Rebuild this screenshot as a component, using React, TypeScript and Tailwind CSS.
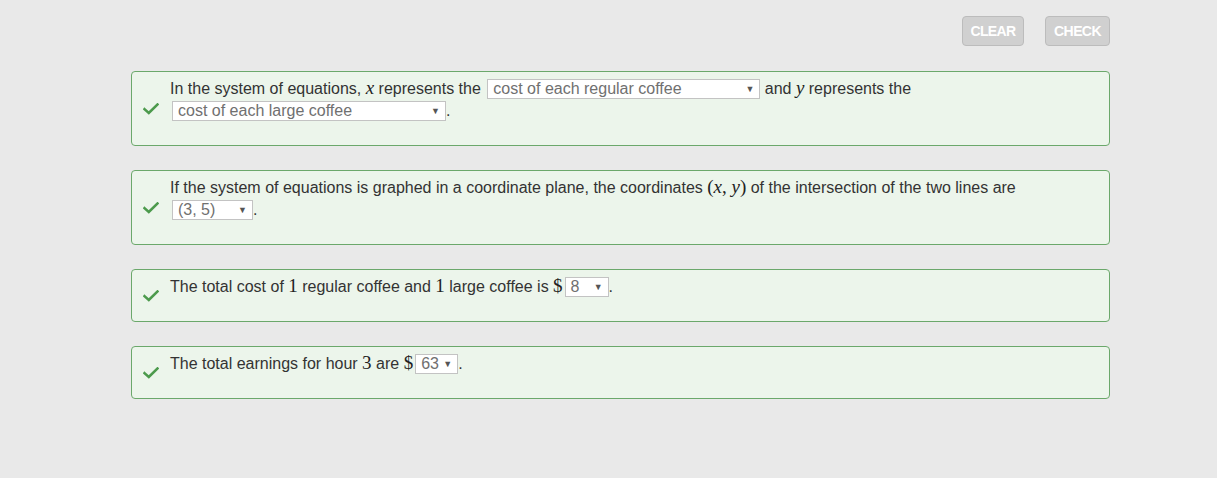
import React from "react";

const Check = () => (
  <svg width="16" height="12" viewBox="0 0 16 12" className="shrink-0">
    <path d="M1.5 6.2 L5.8 10 L14.5 1.5" fill="none" stroke="#4c9a4c" strokeWidth="2.6" strokeLinecap="square" />
  </svg>
);

const Select = ({ value, w, ml = "" }: { value: string; w: string; ml?: string }) => (
  <span
    className={`relative top-[1px] inline-flex items-center justify-between h-[20px] align-top border border-[#c3c3c3] bg-white pl-[5px] pr-[5px] text-[#707070] leading-[18px] ${w} ${ml}`}
  >
    <span>{value}</span>
    <span className="text-[9px] leading-none text-[#555]">▼</span>
  </span>
);

const M = ({ children, italic = true }: { children: React.ReactNode; italic?: boolean }) => (
  <span
    className={`text-[19px] leading-none text-[#222] ${italic ? "italic" : ""}`}
    style={{ fontFamily: '"Liberation Serif", "DejaVu Serif", serif' }}
  >
    {children}
  </span>
);

const Card = ({ children }: { children: React.ReactNode }) => (
  <div className="flex items-center rounded-[4px] border border-[#6ba86b] bg-[#ecf5eb]">
    <div className="w-[38px] flex justify-end pr-[11px]">
      <Check />
    </div>
    <div className="flex-1 pt-[6px] pb-[23px] leading-[22px] text-[16px] text-[#333]">{children}</div>
  </div>
);

export default function App() {
  return (
    <div
      className="w-full h-[478px] bg-[#e9e9e9] pl-[131px] pr-[107px] pt-[16px]"
      style={{ fontFamily: '"Liberation Sans", Arial, sans-serif' }}
    >
      <div className="flex justify-end gap-[21px] mb-[25px]">
        <button className="h-[30px] w-[62px] rounded-[4px] border border-[#bcbcbc] bg-[#d0d0d0] text-white font-bold text-[14px] tracking-[-0.6px]">
          CLEAR
        </button>
        <button className="h-[30px] w-[65px] rounded-[4px] border border-[#bcbcbc] bg-[#d0d0d0] text-white font-bold text-[14px] tracking-[-0.6px]">
          CHECK
        </button>
      </div>
      <div className="flex flex-col gap-[24px]">
        <Card>
          <div>
            In the system of equations, <M>x</M> represents the{" "}
            <Select value="cost of each regular coffee" w="w-[273px]" ml="ml-[2px]" /> and <M>y</M> represents the
          </div>
          <div>
            <Select value="cost of each large coffee" w="w-[274px]" ml="ml-[2px]" />.
          </div>
        </Card>
        <Card>
          <div>
            If the system of equations is graphed in a coordinate plane, the coordinates{" "}
            <M italic={false}>
              (<i>x</i>, <i>y</i>)
            </M>{" "}
            of the intersection of the two lines are
          </div>
          <div>
            <Select value="(3, 5)" w="w-[81px]" ml="ml-[2px]" />.
          </div>
        </Card>
        <Card>
          <div>
            The total cost of <M italic={false}>1</M> regular coffee and <M italic={false}>1</M> large coffee is{" "}
            <M italic={false}>$</M>
            <Select value="8" w="w-[44px]" ml="ml-[2px]" />.
          </div>
        </Card>
        <Card>
          <div>
            The total earnings for hour <M italic={false}>3</M> are <M italic={false}>$</M>
            <Select value="63" w="w-[43px]" ml="ml-[2px]" />.
          </div>
        </Card>
      </div>
    </div>
  );
}
